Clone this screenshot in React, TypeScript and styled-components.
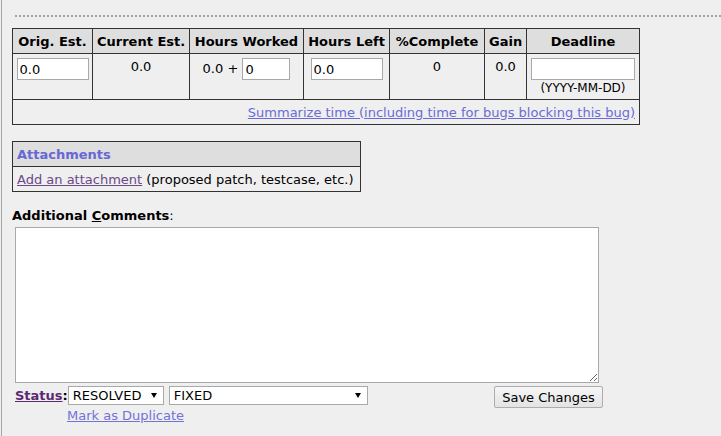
import React from "react";
import styled, { createGlobalStyle } from "styled-components";

const GlobalStyle = createGlobalStyle`
  html, body { margin: 0; padding: 0; background: #efefef; }
  body { font-family: "DejaVu Sans", Verdana, sans-serif; font-size: 13px; color: #000; }
`;

const Page = styled.div`
  margin-left: 1px;
  border-left: 1px solid #a5a5a5;
  min-height: 436px;
  box-sizing: border-box;
  padding: 15px 0 0 10px;
`;

const Separator = styled.div`
  margin-left: 3px;
  border-top: 2px dotted #a3a3a3;
  height: 0;
  margin-bottom: 11px;
`;

const Grid = styled.table<{ $w: number }>`
  border-collapse: collapse;
  table-layout: fixed;
  width: ${(p) => p.$w}px;
  border: 1px solid #333;
`;

const Col = styled.col<{ $w: number }>`
  width: ${(p) => p.$w}px;
`;

const Th = styled.th<{ $align?: string; $tone?: string }>`
  background: #dedede;
  border: 1px solid #333;
  height: 24px;
  padding: 0 4px;
  font-weight: bold;
  white-space: nowrap;
  text-align: ${(p) => p.$align || "center"};
  color: ${(p) => p.$tone || "#000"};
`;

const Td = styled.td<{ $align?: string }>`
  border: 1px solid #333;
  vertical-align: top;
  text-align: ${(p) => p.$align || "center"};
  padding: 4px 3px;
  white-space: nowrap;
`;

const BodyTd = styled(Td)`
  height: 36px;
`;

const PlainTd = styled.td<{ $align?: string }>`
  border: 1px solid #333;
  height: 24px;
  padding: 0 4px;
  text-align: ${(p) => p.$align || "left"};
  white-space: nowrap;
`;

const Field = styled.input<{ $w: number }>`
  box-sizing: border-box;
  width: ${(p) => p.$w}px;
  height: 22px;
  border: 1px solid #a9a9a9;
  background: #fff;
  padding: 0 2px;
  margin: 0;
  font-family: inherit;
  font-size: 13px;
  color: #000;
  vertical-align: middle;
  outline: none;
`;

const CellText = styled.div`
  padding-top: 1px;
`;

const Hint = styled.div`
  font-size: 12px;
  margin-top: 1px;
`;

const Link = styled.a<{ $tone: string; $bold?: boolean }>`
  color: ${(p) => p.$tone};
  text-decoration: underline;
  font-weight: ${(p) => (p.$bold ? "bold" : "normal")};
  cursor: pointer;
`;

const Section = styled.div`
  margin-top: 16px;
`;

const Label = styled.div`
  margin-top: 16px;
  font-weight: bold;
  line-height: 16px;
`;

const Regular = styled.span`
  font-weight: normal;
`;

const Accel = styled.u``;

const CommentBlock = styled.div`
  margin-left: 3px;
  margin-top: 3px;
  width: 588px;
`;

const Comments = styled.textarea`
  display: block;
  box-sizing: border-box;
  width: 584px;
  height: 156px;
  border: 1px solid #a9a9a9;
  background: #fff;
  margin: 0;
  font-family: inherit;
  font-size: 13px;
  outline: none;
`;

const Bottom = styled.div`
  display: flex;
  justify-content: space-between;
  align-items: flex-start;
  margin-top: 3px;
`;

const StatusArea = styled.div`
  display: flex;
  flex-direction: column;
`;

const StatusRow = styled.div`
  display: flex;
  align-items: center;
`;

const Colon = styled.span`
  font-weight: bold;
`;

const SelectBox = styled.div<{ $w: number }>`
  position: relative;
  box-sizing: border-box;
  width: ${(p) => p.$w}px;
  height: 19px;
  border: 1px solid #a9a9a9;
  background: #fff;
  margin-right: 5px;
  padding-left: 4px;
  line-height: 17px;
  font-size: 13px;
  color: #000;
`;

const Arrow = styled.span`
  position: absolute;
  right: 6px;
  top: 6px;
  width: 0;
  height: 0;
  border-left: 3px solid transparent;
  border-right: 3px solid transparent;
  border-top: 5px solid #000;
`;

const DupLine = styled.div`
  margin-left: 52px;
  margin-top: 3px;
`;

const SaveButton = styled.button`
  box-sizing: border-box;
  width: 109px;
  height: 22px;
  border: 1px solid #adadad;
  border-radius: 2px;
  background: linear-gradient(#f6f6f6, #e3e3e3);
  font-family: inherit;
  font-size: 13px;
  color: #000;
  padding: 0;
`;

const timeCols = [80, 97, 114, 86, 95, 42, 113];

export default function App() {
  return (
    <>
      <GlobalStyle />
      <Page>
        <Separator />
        <Grid $w={627}>
          <colgroup>
            {timeCols.map((w, i) => (
              <Col key={i} $w={w} />
            ))}
          </colgroup>
          <thead>
            <tr>
              <Th>Orig. Est.</Th>
              <Th>Current Est.</Th>
              <Th>Hours Worked</Th>
              <Th>Hours Left</Th>
              <Th>%Complete</Th>
              <Th>Gain</Th>
              <Th>Deadline</Th>
            </tr>
          </thead>
          <tbody>
            <tr>
              <BodyTd>
                <Field $w={72} defaultValue="0.0" />
              </BodyTd>
              <BodyTd>
                <CellText>0.0</CellText>
              </BodyTd>
              <BodyTd>
                0.0 + <Field $w={48} defaultValue="0" />
              </BodyTd>
              <BodyTd>
                <Field $w={72} defaultValue="0.0" />
              </BodyTd>
              <BodyTd>
                <CellText>0</CellText>
              </BodyTd>
              <BodyTd>
                <CellText>0.0</CellText>
              </BodyTd>
              <BodyTd>
                <Field $w={104} defaultValue="" />
                <Hint>(YYYY-MM-DD)</Hint>
              </BodyTd>
            </tr>
            <tr>
              <PlainTd colSpan={7} $align="right">
                <Link $tone="#6b6bd6">
                  Summarize time (including time for bugs blocking this bug)
                </Link>
              </PlainTd>
            </tr>
          </tbody>
        </Grid>

        <Section>
          <Grid $w={349}>
            <tbody>
              <tr>
                <Th $align="left" $tone="#6868d4">
                  Attachments
                </Th>
              </tr>
              <tr>
                <PlainTd>
                  <Link $tone="#6a4a86">Add an attachment</Link> (proposed
                  patch, testcase, etc.)
                </PlainTd>
              </tr>
            </tbody>
          </Grid>
        </Section>

        <Label>
          Additional <Accel>C</Accel>omments<Regular>:</Regular>
        </Label>
        <CommentBlock>
          <Comments />
          <Bottom>
            <StatusArea>
              <StatusRow>
                <Link $tone="#5b2a72" $bold>
                  Status
                </Link>
                <Colon>:</Colon>
                <SelectBox $w={96}>
                  RESOLVED
                  <Arrow />
                </SelectBox>
                <SelectBox $w={199}>
                  FIXED
                  <Arrow />
                </SelectBox>
              </StatusRow>
              <DupLine>
                <Link $tone="#7272d8">Mark as Duplicate</Link>
              </DupLine>
            </StatusArea>
            <SaveButton>Save Changes</SaveButton>
          </Bottom>
        </CommentBlock>
      </Page>
    </>
  );
}
